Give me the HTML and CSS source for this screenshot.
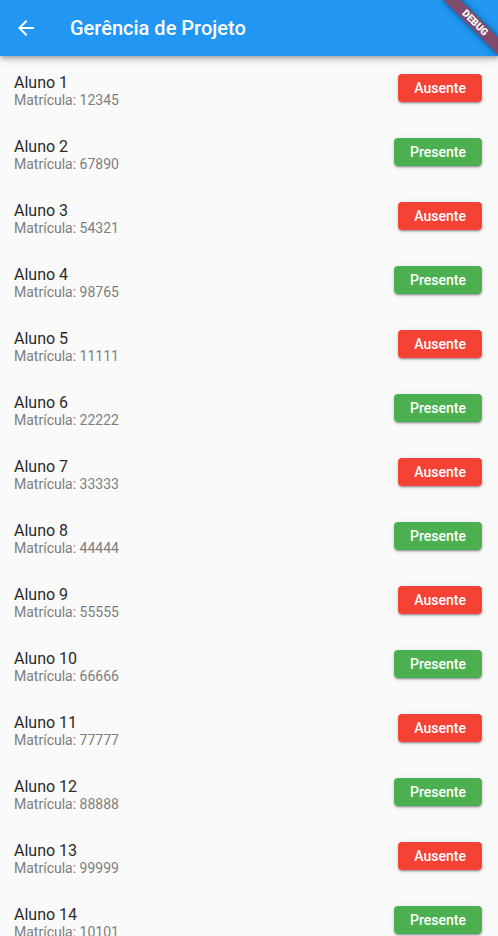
FILE: index.html
```html
<!DOCTYPE html>
<html lang="pt">
<head>
<meta charset="utf-8">
<title>Gerência de Projeto</title>
<link rel="stylesheet" href="styles.css">
</head>
<body>
<div class="app">
  <header class="appbar">
    <svg class="back" width="24" height="24" viewBox="0 0 24 24"><path fill="#fff" d="M20 11H7.83l5.59-5.59L12 4l-8 8 8 8 1.41-1.41L7.83 13H20v-2z"/></svg>
    <h1 class="title">Gerência de Projeto</h1>
  </header>
  <main class="list">
    <div class="row"><div class="info"><div class="name">Aluno 1</div><div class="sub">Matrícula: 12345</div></div><button class="btn absent">Ausente</button></div>
    <div class="row"><div class="info"><div class="name">Aluno 2</div><div class="sub">Matrícula: 67890</div></div><button class="btn present">Presente</button></div>
    <div class="row"><div class="info"><div class="name">Aluno 3</div><div class="sub">Matrícula: 54321</div></div><button class="btn absent">Ausente</button></div>
    <div class="row"><div class="info"><div class="name">Aluno 4</div><div class="sub">Matrícula: 98765</div></div><button class="btn present">Presente</button></div>
    <div class="row"><div class="info"><div class="name">Aluno 5</div><div class="sub">Matrícula: 11111</div></div><button class="btn absent">Ausente</button></div>
    <div class="row"><div class="info"><div class="name">Aluno 6</div><div class="sub">Matrícula: 22222</div></div><button class="btn present">Presente</button></div>
    <div class="row"><div class="info"><div class="name">Aluno 7</div><div class="sub">Matrícula: 33333</div></div><button class="btn absent">Ausente</button></div>
    <div class="row"><div class="info"><div class="name">Aluno 8</div><div class="sub">Matrícula: 44444</div></div><button class="btn present">Presente</button></div>
    <div class="row"><div class="info"><div class="name">Aluno 9</div><div class="sub">Matrícula: 55555</div></div><button class="btn absent">Ausente</button></div>
    <div class="row"><div class="info"><div class="name">Aluno 10</div><div class="sub">Matrícula: 66666</div></div><button class="btn present">Presente</button></div>
    <div class="row"><div class="info"><div class="name">Aluno 11</div><div class="sub">Matrícula: 77777</div></div><button class="btn absent">Ausente</button></div>
    <div class="row"><div class="info"><div class="name">Aluno 12</div><div class="sub">Matrícula: 88888</div></div><button class="btn present">Presente</button></div>
    <div class="row"><div class="info"><div class="name">Aluno 13</div><div class="sub">Matrícula: 99999</div></div><button class="btn absent">Ausente</button></div>
    <div class="row"><div class="info"><div class="name">Aluno 14</div><div class="sub">Matrícula: 10101</div></div><button class="btn present">Presente</button></div>
  </main>
  <div class="debug"><span>DEBUG</span></div>
</div>
</body>
</html>
```

FILE: styles.css
```css
* { box-sizing: border-box; }
html, body { margin: 0; padding: 0; }
body {
  background: #fafafa;
  font-family: Roboto, "Liberation Sans", sans-serif;
  overflow: hidden;
  height: 936px;
}
.app {
  position: relative;
  height: 936px;
  overflow: hidden;
}
.appbar {
  position: relative;
  z-index: 2;
  height: 56px;
  background: #2196f3;
  display: flex;
  align-items: center;
  padding-left: 14px;
  box-shadow: 0 2px 4px -1px rgba(0,0,0,0.2), 0 4px 5px 0 rgba(0,0,0,0.14), 0 1px 10px 0 rgba(0,0,0,0.12);
}
.back { display: block; flex: none; }
.title {
  margin: 0 0 0 32px;
  color: #fff;
  font-size: 20px;
  font-weight: 500;
  line-height: 24px;
  letter-spacing: 0;
}
.list { display: flex; flex-direction: column; }
.row {
  height: 64px;
  display: flex;
  align-items: center;
  justify-content: space-between;
  padding: 0 16px 0 14px;
}
.info {
  display: flex;
  flex-direction: column;
  padding-top: 3px;
}
.name {
  font-size: 16px;
  line-height: 20px;
  color: #2a2a2a;
}
.sub {
  font-size: 14px;
  line-height: 14px;
  color: #7e7e7e;
}
.btn {
  height: 28px;
  border: none;
  border-radius: 4px;
  padding: 0 16px;
  color: #fff;
  font-family: Roboto, "Liberation Sans", sans-serif;
  font-size: 14px;
  font-weight: 500;
  box-shadow: 0 3px 1px -2px rgba(0,0,0,0.2), 0 2px 2px 0 rgba(0,0,0,0.14), 0 1px 5px 0 rgba(0,0,0,0.12);
}
.absent { background: #f44336; }
.present { background: #4caf50; }
.debug {
  position: absolute;
  z-index: 3;
  left: 435px;
  top: 17px;
  width: 80px;
  height: 12px;
  transform: rotate(45deg);
  background: rgba(183,28,28,0.63);
  box-shadow: 0 0 6px rgba(0,0,0,0.5);
  display: flex;
  align-items: center;
  justify-content: center;
}
.debug span {
  color: #fff;
  font-size: 10px;
  font-weight: 900;
  line-height: 12px;
  letter-spacing: 0;
}
```
